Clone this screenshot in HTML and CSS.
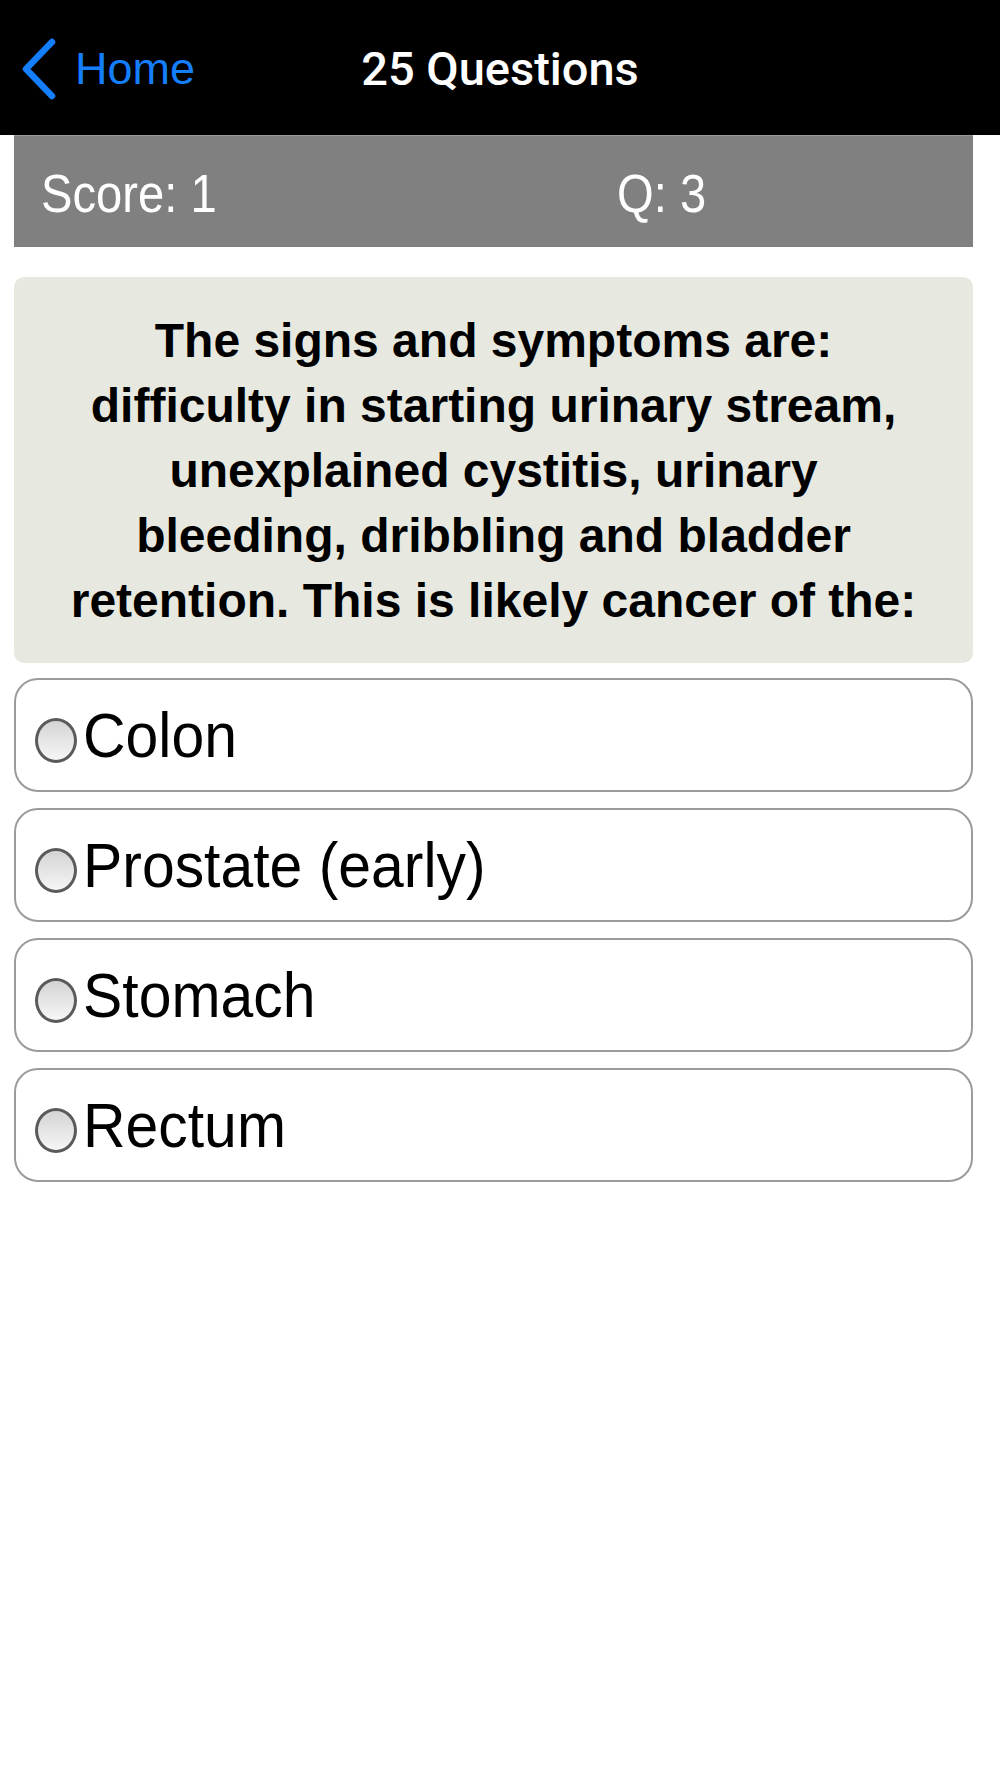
FILE: index.html
```html
<!DOCTYPE html>
<html lang="en">
<head>
<meta charset="utf-8">
<title>25 Questions</title>
<link rel="stylesheet" href="styles.css">
</head>
<body>
<header class="navbar">
  <a class="back" href="#">
    <svg class="chevron" width="36" height="64" viewBox="0 0 36 64" aria-hidden="true">
      <polyline points="30,4 4,31 30,58" fill="none" stroke="#157efb" stroke-width="6.5" stroke-linecap="round" stroke-linejoin="round"/>
    </svg>
    <span class="back-label">Home</span>
  </a>
  <h1 class="title">25 Questions</h1>
</header>
<main class="content">
  <div class="scorebar">
    <span class="stat">Score: 1</span>
    <span class="stat">Q: 3</span>
  </div>
  <div class="question">The signs and symptoms are: difficulty in starting urinary stream, unexplained cystitis, urinary bleeding, dribbling and bladder retention. This is likely cancer of the:</div>
  <ul class="options">
    <li class="option"><span class="radio"></span><span class="label">Colon</span></li>
    <li class="option"><span class="radio"></span><span class="label">Prostate (early)</span></li>
    <li class="option"><span class="radio"></span><span class="label">Stomach</span></li>
    <li class="option"><span class="radio"></span><span class="label">Rectum</span></li>
  </ul>
</main>
</body>
</html>
```
FILE: styles.css
```css
html, body {
  margin: 0;
  padding: 0;
  background: #ffffff;
}
body {
  font-family: "Liberation Sans", Arial, Helvetica, sans-serif;
  color: #000;
}
.navbar {
  position: relative;
  height: 135px;
  background: #000;
  display: flex;
  align-items: center;
  justify-content: center;
}
.back {
  position: absolute;
  left: 22px;
  top: 38px;
  display: flex;
  align-items: center;
  text-decoration: none;
  color: #157efb;
}
.chevron {
  display: block;
}
.back-label {
  font-size: 45px;
  margin-left: 17px;
  margin-top: -2px;
}
.title {
  margin: 0;
  font-family: Roboto, "Liberation Sans", sans-serif;
  font-weight: 500;
  font-size: 47px;
  color: #fff;
  margin-top: 2px;
}
.content {
  width: 959px;
  margin-left: 14px;
}
.scorebar {
  height: 112px;
  background: #808080;
  border-top: 1px solid #9a9a9a;
  box-sizing: border-box;
  display: grid;
  grid-template-columns: 576px 1fr;
  align-items: center;
  padding-left: 27px;
  color: #fff;
  font-size: 53px;
}
.stat {
  display: inline-block;
  justify-self: start;
  transform: scaleX(0.89);
  transform-origin: left center;
  margin-top: 4px;
}
.question {
  margin-top: 30px;
  background: #e7e8e0;
  border-radius: 10px;
  padding: 31px 50px 30px;
  text-align: center;
  font-weight: bold;
  font-size: 48px;
  line-height: 65px;
}
.options {
  list-style: none;
  margin: 15px 0 0;
  padding: 0;
  display: flex;
  flex-direction: column;
  gap: 16px;
}
.option {
  height: 114px;
  box-sizing: border-box;
  border: 2.5px solid #9b9b9b;
  border-radius: 24px;
  display: flex;
  align-items: center;
  padding-left: 19px;
}
.radio {
  width: 42px;
  height: 45px;
  box-sizing: border-box;
  border: 3px solid #5a5a5a;
  border-radius: 50%;
  background: linear-gradient(to bottom, #d4d4d4, #f6f6f6);
  margin-right: 6px;
  margin-top: 10px;
  flex: none;
}
.label {
  display: inline-block;
  font-size: 63px;
  line-height: 1;
  transform: scaleX(0.935);
  transform-origin: left center;
}
```
